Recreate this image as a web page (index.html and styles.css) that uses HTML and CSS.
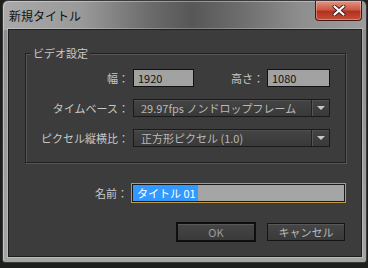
FILE: index.html
```html
<!DOCTYPE html>
<html lang="ja">
<head>
    <meta charset="UTF-8">
    <title>新規タイトル</title>
    <link rel="stylesheet" href="styles.css">
</head>
<body>
    <div class="window">
        <div class="titlebar">
            <span class="title">新規タイトル</span>
            <button class="close">
                <svg width="14" height="11" viewBox="0 0 14 11">
                    <path d="M2.5 1.5 L11.5 9.5 M11.5 1.5 L2.5 9.5" stroke="#3a2420" stroke-width="4" stroke-linecap="round"/>
                    <path d="M2.5 1.5 L11.5 9.5 M11.5 1.5 L2.5 9.5" stroke="#ffffff" stroke-width="2.2" stroke-linecap="round"/>
                </svg>
            </button>
        </div>

        <div class="client">
            <div class="group">
                <div class="group-title">ビデオ設定</div>
                <div class="rows">
                    <div class="row">
                        <label class="label" for="width">幅：</label>
                        <input class="field" id="width" value="1920">
                        <label class="label label-h" for="height">高さ：</label>
                        <input class="field field-h" id="height" value="1080">
                    </div>
                    <div class="row">
                        <label class="label">タイムベース：</label>
                        <div class="select">
                            <span class="select-text">29.97fps ノンドロップフレーム</span>
                            <span class="select-arrow"></span>
                        </div>
                    </div>
                    <div class="row">
                        <label class="label">ピクセル縦横比：</label>
                        <div class="select">
                            <span class="select-text">正方形ピクセル (1.0)</span>
                            <span class="select-arrow"></span>
                        </div>
                    </div>
                </div>
            </div>

            <div class="name-row">
                <label class="label">名前：</label>
                <div class="name-field"><span class="selected">タイトル 01</span></div>
            </div>

            <div class="buttons">
                <button class="btn btn-default">OK</button>
                <button class="btn">キャンセル</button>
            </div>
        </div>
    </div>

    <div class="desk"></div>
</body>
</html>
```

FILE: styles.css
```css
* {
    box-sizing: border-box;
}
body {
    margin: 0;
    width: 368px;
    height: 268px;
    overflow: hidden;
    background: #1c1f1b;
    font-family: "Noto Sans CJK JP", "Noto Sans", sans-serif;
    font-size: 11px;
}
.window {
    width: 365px;
    margin-left: 2px;
    border: 1px solid #3a3a3a;
    border-radius: 6px 6px 3px 3px;
    padding: 0 4px 5px 5px;
    background:
        linear-gradient(to right, #a9a9a9 0%, #999 22%, #6c6c6c 40%, #575757 52%, #6e6e6e 66%, #8e8e8e 82%, #9c9c9c 100%) top / 100% 29px no-repeat,
        linear-gradient(#8c8c8c, #a4a4a4);
    box-shadow: inset 1px 1px 0 rgba(255, 255, 255, 0.35);
}
.titlebar {
    height: 28px;
    display: flex;
    align-items: flex-start;
    justify-content: space-between;
}
.title {
    padding: 8px 0 0 1px;
    font-size: 12px;
    line-height: 14px;
    color: #111;
}
.close {
    width: 47px;
    height: 20px;
    padding: 0;
    border: 1px solid #45180f;
    border-top: none;
    border-radius: 0 0 4px 4px;
    background: linear-gradient(#e49484 0%, #cc5a46 45%, #b3321f 55%, #c4503a 100%);
    box-shadow: inset 0 0 0 1px rgba(255, 255, 255, 0.3);
    display: flex;
    align-items: center;
    justify-content: center;
}
.client {
    height: 228px;
    background: #3c3c3c;
    border: 1px solid #1f1f1f;
    box-shadow: 0 0 0 1px rgba(255, 255, 255, 0.25);
    padding: 23px 15px 0 16px;
}
.group {
    border: 1px solid #222;
    box-shadow: inset 1px 1px 0 #565656, 1px 1px 0 #565656;
}
.group-title {
    width: fit-content;
    margin: -8px 0 0 5px;
    padding: 0 2px;
    background: #3c3c3c;
    color: #c8c8c8;
    line-height: 14px;
}
.rows {
    display: flex;
    flex-direction: column;
    gap: 12px;
    padding: 9px 0 15px;
}
.row {
    display: flex;
    align-items: center;
    height: 18px;
}
.label {
    width: 103px;
    margin-right: 4px;
    text-align: right;
    color: #c8c8c8;
    line-height: 14px;
}
.label-h {
    width: 70px;
    margin-right: 3px;
}
.field {
    width: 61px;
    height: 18px;
    border: 1px solid #111;
    background: #a2a2a2;
    color: #111;
    font: inherit;
    line-height: 16px;
    padding: 0 0 0 4px;
    outline: none;
}
.field-h {
    width: 63px;
}
.select {
    width: 197px;
    height: 18px;
    display: flex;
    border: 1px solid #1a1a1a;
    background: linear-gradient(#444, #393939);
    box-shadow: inset 0 1px 0 #505050;
    color: #b8b8b8;
}
.select-text {
    flex: 1;
    padding-left: 7px;
    line-height: 16px;
    white-space: nowrap;
}
.select-arrow {
    width: 18px;
    border-left: 1px solid #222;
    box-shadow: inset 1px 0 0 #555;
    display: flex;
    align-items: center;
    justify-content: center;
}
.select-arrow::after {
    content: "";
    border-left: 4px solid transparent;
    border-right: 4px solid transparent;
    border-top: 4px solid #c8c8c8;
}
.name-row {
    display: flex;
    align-items: center;
    margin-top: 20px;
}
.name-row .label {
    margin-right: 3px;
}
.name-field {
    flex: 1;
    height: 20px;
    border: 1px solid #c09a48;
    box-shadow: inset 0 0 0 1px #1a1a1a;
    background: #a5a5a5;
    padding: 1px;
}
.selected {
    display: inline-block;
    height: 16px;
    line-height: 16px;
    background: #3399ff;
    color: #fff;
    padding: 0 2px 0 4px;
}
.buttons {
    display: flex;
    justify-content: flex-end;
    align-items: center;
    gap: 11px;
    margin: 19px 1px 0 0;
}
.btn {
    width: 78px;
    height: 18px;
    padding: 0;
    border: 1px solid #151515;
    background: linear-gradient(#464646, #3a3a3a);
    box-shadow: inset 0 1px 0 #585858;
    color: #b8b8b8;
    font: inherit;
    line-height: 16px;
}
.btn-default {
    width: 80px;
    height: 20px;
    border: 2px solid #0e0e0e;
    color: #9c9c9c;
}
.desk {
    height: 5px;
    background: #1c1f1b;
}
```
